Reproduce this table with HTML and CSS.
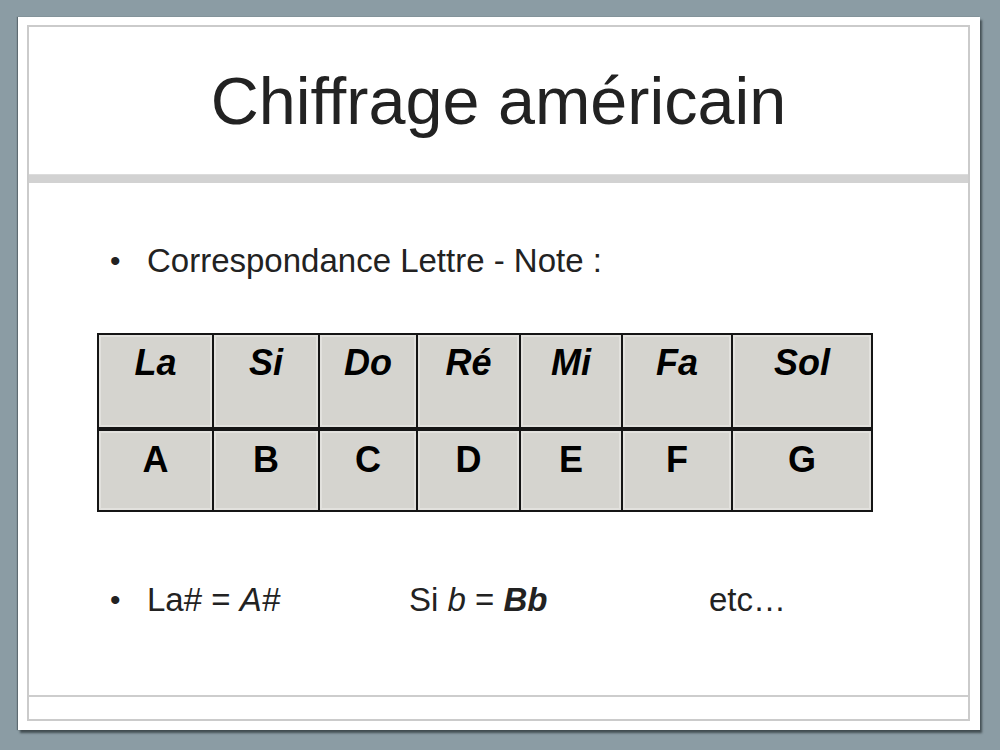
FILE: index.html
```html
<!DOCTYPE html>
<html lang="fr">
<head>
<meta charset="utf-8">
<title>Chiffrage américain</title>
<link rel="stylesheet" href="styles.css">
</head>
<body>
<div class="slide">
  <div class="frame">
    <header class="title-area">
      <h1 class="title">Chiffrage américain</h1>
    </header>
    <div class="band"></div>
    <main class="content">
      <div class="bullet-row first">
        <span class="bullet">•</span>
        <span class="text">Correspondance Lettre - Note :</span>
      </div>
      <div class="notes">
        <div class="cell top">La</div>
        <div class="cell top">Si</div>
        <div class="cell top">Do</div>
        <div class="cell top">Ré</div>
        <div class="cell top">Mi</div>
        <div class="cell top">Fa</div>
        <div class="cell top">Sol</div>
        <div class="cell bottom">A</div>
        <div class="cell bottom">B</div>
        <div class="cell bottom">C</div>
        <div class="cell bottom">D</div>
        <div class="cell bottom">E</div>
        <div class="cell bottom">F</div>
        <div class="cell bottom">G</div>
      </div>
      <div class="bullet-row second">
        <span class="bullet">•</span>
        <span class="ex ex1">La# = <i>A#</i></span>
        <span class="ex ex2">Si <i>b</i> = <b><i>Bb</i></b></span>
        <span class="ex ex3">etc…</span>
      </div>
    </main>
    <div class="footer-line"></div>
    <footer class="footer"></footer>
  </div>
</div>
</body>
</html>
```

FILE: styles.css
```css
html, body {
  margin: 0;
  padding: 0;
}

body {
  width: 1000px;
  height: 750px;
  background: #8b9ca4;
  font-family: "Liberation Sans", Arial, sans-serif;
  overflow: hidden;
}

.slide {
  box-sizing: border-box;
  width: 962px;
  height: 713px;
  margin: 17px 0 0 18px;
  background: #ffffff;
  padding: 8px 10px 9px 9px;
  box-shadow: -1px 0 1px rgba(50, 60, 65, 0.5), 2px 3px 2px rgba(30, 38, 42, 0.65);
}

.frame {
  box-sizing: border-box;
  height: 100%;
  border: 2px solid #cbcbcb;
  display: flex;
  flex-direction: column;
}

.title-area {
  height: 147px;
  flex: none;
  display: flex;
  align-items: center;
  justify-content: center;
}

.title {
  margin: 0;
  font-weight: normal;
  font-size: 66.5px;
  color: #222;
}

.band {
  height: 9px;
  flex: none;
  background: #d2d2d2;
  border-top: 1px solid #dcdcdc;
  box-sizing: border-box;
}

.content {
  flex: 1;
  padding: 58px 0 0 0;
}

.bullet-row {
  display: flex;
  align-items: center;
  height: 40px;
  line-height: 40px;
  font-size: 33px;
  color: #222;
  padding-left: 81px;
}

.bullet-row .bullet {
  width: 37px;
  flex: none;
  font-size: 30px;
}

.bullet-row.second {
  margin-top: 68px;
}

.ex1 { width: 262px; }
.ex2 { width: 300px; }

.notes {
  margin: 52px 0 0 68px;
  width: 776px;
  box-sizing: border-box;
  padding: 2px;
  background: #151515;
  display: grid;
  grid-template-columns: 113px 104px 96px 101px 100px 108px 138px;
  grid-template-rows: 92px 79px;
  column-gap: 2px;
  row-gap: 4px;
}

.cell {
  background: #d5d4cf;
  box-shadow: inset 0 0 0 2px #e2e1dd;
  text-align: center;
  font-size: 36px;
  font-weight: bold;
  color: #000;
  line-height: 42px;
}

.cell.top {
  font-style: italic;
  padding-top: 7px;
}

.cell.bottom {
  padding-top: 8px;
}

.footer-line {
  height: 2px;
  flex: none;
  background: #cdcdcd;
}

.footer {
  height: 22px;
  flex: none;
}
```
